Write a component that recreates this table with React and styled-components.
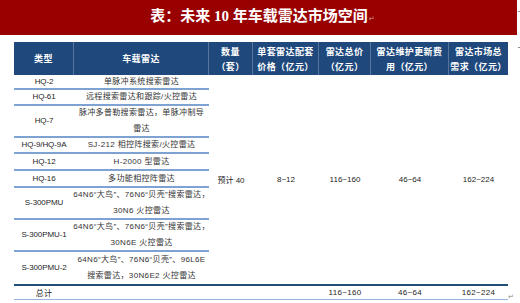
import React from 'react';
import styled, { createGlobalStyle } from 'styled-components';

const header = [
  ['类型'],
  ['车载雷达'],
  ['数量', '（套）'],
  ['单套雷达配套', '价格（亿元）'],
  ['雷达总价', '（亿元）'],
  ['雷达维护更新费', '用（亿元）'],
  ['雷达市场总', '需求（亿元）'],
];

const rows = [
  { type: 'HQ-2', radar: ['单脉冲系统搜索雷达'] },
  { type: 'HQ-61', radar: ['远程搜索雷达和跟踪/火控雷达'] },
  { type: 'HQ-7', radar: ['脉冲多普勒搜索雷达，单脉冲制导', '雷达'] },
  { type: 'HQ-9/HQ-9A', radar: ['SJ-212 相控阵搜索/火控雷达'] },
  { type: 'HQ-12', radar: ['H-2000 型雷达'] },
  { type: 'HQ-16', radar: ['多功能相控阵雷达'] },
  { type: 'S-300PMU', radar: ['64N6“大鸟”、76N6“贝壳”搜索雷达，', '30N6 火控雷达'] },
  { type: 'S-300PMU-1', radar: ['64N6“大鸟”、76N6“贝壳”搜索雷达，', '30N6E 火控雷达'] },
  { type: 'S-300PMU-2', radar: ['64N6“大鸟”、76N6“贝壳”、96L6E', '搜索雷达，30N6E2 火控雷达'] },
];

const merged = ['预计 40', '8~12', '116~160', '46~64', '162~224'];
const totals = ['总计', '', '', '', '116~160', '46~64', '162~224'];

const App = () => {
  return (
    <Page>
      <GlobalStyle />
      <Main>
        <TitleBar>
          <Title>
            表：未来 10 年车载雷达市场空间
            <TitleReturn>↵</TitleReturn>
          </Title>
        </TitleBar>
        <TableRow>
          <Table>
            {header.map((lines, i) => (
              <HeadCell key={i} $last={i === header.length - 1}>
                {lines.map((l) => (
                  <span key={l}>{l}</span>
                ))}
              </HeadCell>
            ))}
            {merged.map((text, i) => (
              <MergedCell key={text} $col={i + 3}>
                {text}
              </MergedCell>
            ))}
            {rows.map((row, i) => {
              const last = i === rows.length - 1;
              return (
                <React.Fragment key={row.type}>
                  <TypeCell $last={last}>{row.type}</TypeCell>
                  <RadarCell $last={last}>
                    {row.radar.map((l) => (
                      <span key={l}>{l}</span>
                    ))}
                  </RadarCell>
                </React.Fragment>
              );
            })}
            {totals.map((text, i) => (
              <TotalCell key={i}>{text}</TotalCell>
            ))}
          </Table>
          <EndMark>↵</EndMark>
        </TableRow>
      </Main>
      <Margin>
        <Tick />
        <Tick />
      </Margin>
    </Page>
  );
};

const GlobalStyle = createGlobalStyle`
  html, body {
    margin: 0;
    padding: 0;
    background: #ffffff;
  }
  body {
    width: 520px;
    height: 303px;
    overflow: hidden;
    font-family: "Liberation Sans", "Noto Sans CJK SC", sans-serif;
  }
`;

const Page = styled.div`
  display: flex;
  width: 520px;
  height: 303px;
`;

const Main = styled.div`
  width: 517px;
  display: flex;
  flex-direction: column;
`;

const TitleBar = styled.div`
  height: 35px;
  background-color: #990000;
  display: flex;
  align-items: center;
  justify-content: center;
`;

const Title = styled.div`
  color: #ffffff;
  font-family: "Liberation Serif", "Noto Sans CJK SC", serif;
  font-size: 15px;
  font-weight: bold;
  line-height: 18px;
  padding-left: 8px;
`;

const TitleReturn = styled.span`
  font-family: "DejaVu Sans", sans-serif;
  font-size: 7px;
  font-weight: normal;
  color: rgba(255, 255, 255, 0.6);
  margin-left: 1px;
`;

const TableRow = styled.div`
  display: flex;
  align-items: flex-end;
  padding-left: 14px;
  margin-top: 7px;
`;

const Table = styled.div`
  display: grid;
  grid-template-columns: 60px 135px 44px 66px 52px 78px 59px;
  grid-template-rows: 33px 15px 16px 32px 16px 17px 17px 32px 32px 32px 16px;
`;

const HeadCell = styled.div`
  background-color: #1f497d;
  color: #ffffff;
  font-family: "Noto Sans CJK SC", sans-serif;
  font-size: 9px;
  font-weight: bold;
  letter-spacing: 0.4px;
  line-height: 15px;
  display: flex;
  flex-direction: column;
  align-items: center;
  justify-content: center;
  border-right: ${({ $last }) => ($last ? 'none' : '1px solid #56749c')};
  white-space: nowrap;
`;

const BodyCell = styled.div`
  box-sizing: border-box;
  display: flex;
  flex-direction: column;
  align-items: center;
  justify-content: center;
  color: #262626;
  font-size: 8px;
  line-height: 16px;
  white-space: nowrap;
  border-bottom: ${({ $last }) => ($last ? 'none' : '2px solid #7ea3d2')};
`;

const TypeCell = styled(BodyCell)`
  font-family: "Liberation Sans", sans-serif;
  letter-spacing: -0.1px;
`;

const RadarCell = styled(BodyCell)`
  font-family: "Liberation Sans", "Noto Sans CJK SC", sans-serif;
  letter-spacing: 0.35px;
  color: #333333;
`;

const MergedCell = styled.div`
  grid-column: ${({ $col }) => $col};
  grid-row: 2 / span 9;
  display: flex;
  align-items: center;
  justify-content: center;
  font-family: "Liberation Sans", "Noto Sans CJK SC", sans-serif;
  font-size: 8px;
  color: #262626;
`;

const TotalCell = styled.div`
  box-sizing: border-box;
  display: flex;
  align-items: center;
  justify-content: center;
  font-family: "Liberation Sans", "Noto Sans CJK SC", sans-serif;
  font-size: 8px;
  letter-spacing: 0.3px;
  color: #262626;
  border-top: 2px solid #1f4e79;
  border-bottom: 1px solid #9ab6dc;
`;

const EndMark = styled.span`
  font-family: "DejaVu Sans", sans-serif;
  font-size: 7px;
  line-height: 9px;
  color: #8a8a8a;
  margin-bottom: -2px;
`;

const Margin = styled.div`
  display: flex;
  flex-direction: column;
  gap: 35px;
  padding-top: 11px;
  padding-left: 1px;
`;

const Tick = styled.div`
  width: 2px;
  height: 1px;
  background-color: #8c8c8c;
`;

export default App;
